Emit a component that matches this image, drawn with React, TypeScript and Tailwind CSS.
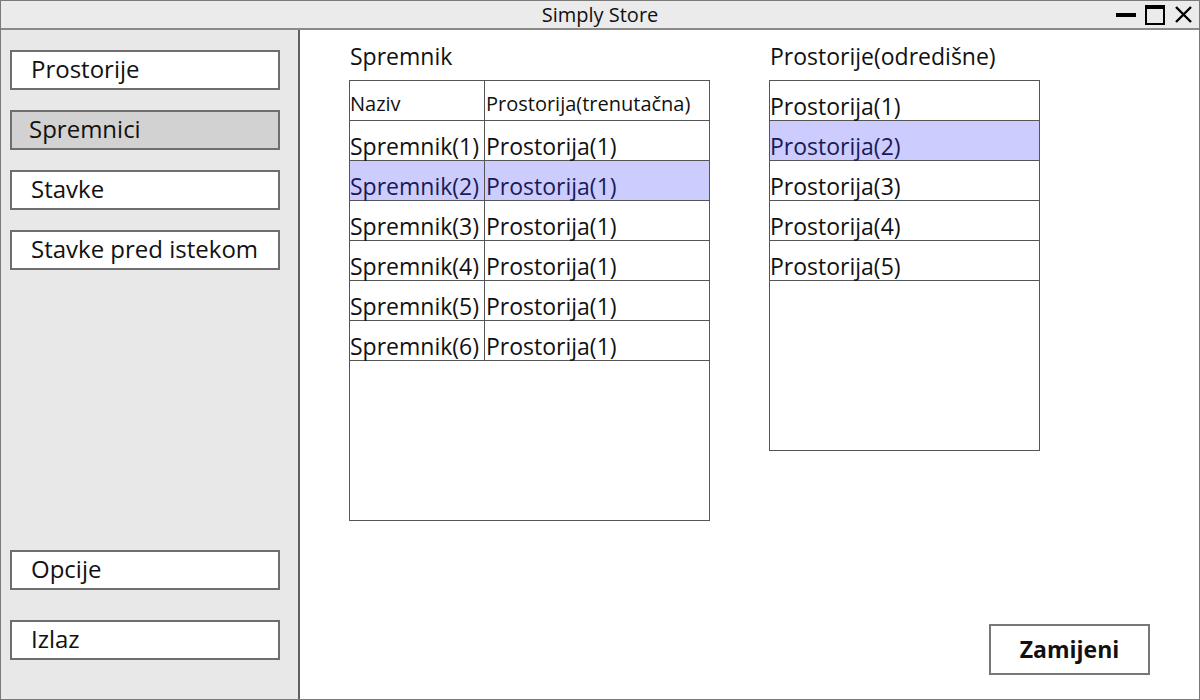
import React from "react";

const font = { fontFamily: '"Open Sans", "Noto Sans", sans-serif' };

function SideButton({ label, active }: { label: string; active?: boolean }) {
  return (
    <div
      className={`h-[40px] w-[270px] border-2 border-[#6e6e6e] flex items-center pb-[2px] text-[24px] leading-none text-[#111] whitespace-nowrap ${
        active ? "bg-[#d2d2d2] pl-[17px]" : "bg-white pl-[19px]"
      }`}
    >
      {label}
    </div>
  );
}

const spremnici = [1, 2, 3, 4, 5, 6];
const prostorije = [1, 2, 3, 4, 5];

export default function App() {
  return (
    <div
      style={font}
      className="w-[1200px] h-[700px] border border-[#7a7a7a] bg-white flex flex-col overflow-hidden"
    >
      {/* Title bar */}
      <div className="h-[29px] shrink-0 bg-[#ebebeb] border-b-2 border-[#8a8a8a] relative flex items-center justify-center">
        <span className="text-[20px] text-[#111] leading-none">Simply Store</span>
        <div className="absolute right-[6px] top-0 h-full flex items-center gap-[9px]">
          <div className="w-[20px] h-[4px] bg-black" />
          <div className="w-[20px] h-[20px] border-2 border-t-4 border-black" />
          <svg width="19" height="19" viewBox="0 0 19 19">
            <path d="M2 2 L17 17 M17 2 L2 17" stroke="black" strokeWidth="2.4" />
          </svg>
        </div>
      </div>

      <div className="flex flex-1 min-h-0">
        {/* Sidebar */}
        <div className="w-[299px] shrink-0 bg-[#e8e8e8] border-r-2 border-[#606060] flex flex-col pl-[9px] pt-[20px] pb-[39px]">
          <div className="flex flex-col gap-[20px]">
            <SideButton label="Prostorije" />
            <SideButton label="Spremnici" active />
            <SideButton label="Stavke" />
            <SideButton label="Stavke pred istekom" />
          </div>
          <div className="mt-auto flex flex-col gap-[30px]">
            <SideButton label="Opcije" />
            <SideButton label="Izlaz" />
          </div>
        </div>

        {/* Main */}
        <div className="flex-1 flex flex-col pl-[49px] pr-[49px] pb-[24px]">
          <div className="flex gap-[59px] pt-[12px]">
            {/* Spremnik */}
            <div className="flex flex-col">
              <div className="h-[38px] pl-[1px] text-[23px] text-[#111] leading-[28px] whitespace-nowrap">Spremnik</div>
              <div className="w-[361px] h-[441px] border border-[#555] flex flex-col">
                <div className="flex h-[40px] border-b border-[#555] shrink-0">
                  <div className="w-[135px] border-r border-[#555] pt-[11px] text-[20px] leading-[24px] text-[#111]">Naziv</div>
                  <div className="flex-1 pl-[1px] pt-[11px] text-[20px] leading-[24px] text-[#111] whitespace-nowrap">Prostorija(trenutačna)</div>
                </div>
                {spremnici.map((n) => (
                  <div
                    key={n}
                    className={`flex h-[40px] border-b border-[#555] shrink-0 text-[23px] leading-[28px] ${
                      n === 2 ? "bg-[#ccccff] text-[#1a1a55]" : "text-[#111]"
                    }`}
                  >
                    <div className="w-[135px] border-r border-[#555] pt-[11px] whitespace-nowrap overflow-visible">Spremnik({n})</div>
                    <div className="flex-1 pl-[1px] pt-[11px] whitespace-nowrap">Prostorija(1)</div>
                  </div>
                ))}
              </div>
            </div>

            {/* Prostorije */}
            <div className="flex flex-col">
              <div className="h-[38px] pl-[1px] text-[23px] text-[#111] leading-[28px] whitespace-nowrap">Prostorije(odredišne)</div>
              <div className="w-[271px] h-[371px] border border-[#555] flex flex-col">
                {prostorije.map((n) => (
                  <div
                    key={n}
                    className={`h-[40px] border-b border-[#555] shrink-0 pt-[11px] text-[23px] leading-[28px] whitespace-nowrap ${
                      n === 2 ? "bg-[#ccccff] text-[#1a1a55]" : "text-[#111]"
                    }`}
                  >
                    Prostorija({n})
                  </div>
                ))}
              </div>
            </div>
          </div>

          <div className="mt-auto self-end">
            <div className="w-[161px] h-[51px] border-2 border-[#777] flex items-center justify-center text-[23px] font-bold text-[#111]">
              Zamijeni
            </div>
          </div>
        </div>
      </div>
    </div>
  );
}
